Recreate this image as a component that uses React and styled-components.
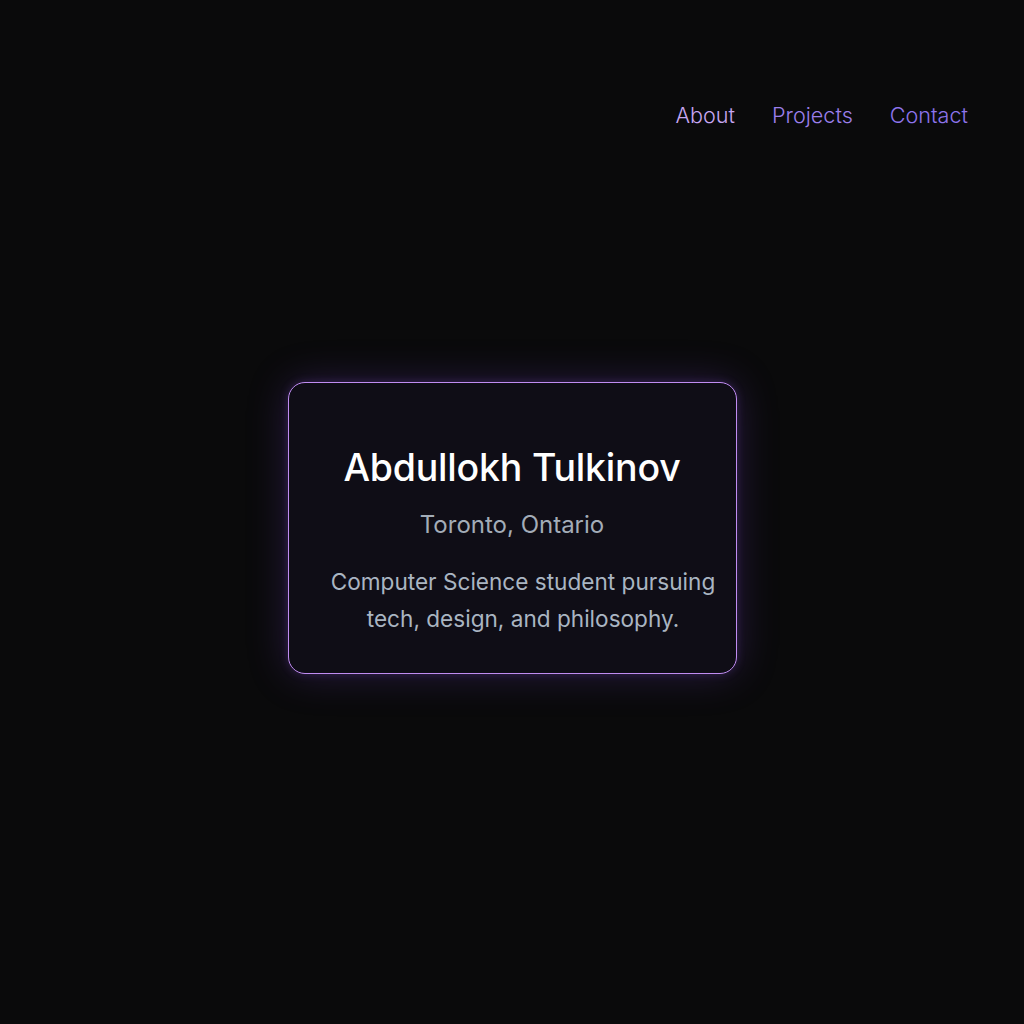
import React from "react";
import styled, { createGlobalStyle } from "styled-components";

const Global = createGlobalStyle`
  html, body { margin: 0; padding: 0; background: #0a0a0b; }
  body { font-family: Inter, "Noto Sans", sans-serif; }
`;

const Page = styled.div`
  min-height: 1024px;
  display: flex;
  flex-direction: column;
  background: #0a0a0b;
`;

const Header = styled.header`
  height: 140px;
  display: flex;
  justify-content: flex-end;
  align-items: flex-start;
  padding: 100px 56px 0 0;
  box-sizing: border-box;
`;

const Nav = styled.nav`
  display: flex;
  gap: 37px;
`;

const NavLink = styled.a`
  font-size: 21.6px;
  font-weight: 300;
  line-height: 30px;
  color: ${(p) => p.$color};
  text-decoration: none;
`;

const Main = styled.main`
  flex: 1;
  display: flex;
  justify-content: center;
  align-items: flex-start;
  padding-top: 242px;
`;

const Card = styled.section`
  width: 449px;
  height: 292px;
  box-sizing: border-box;
  border: 1.5px solid #c08cf2;
  border-radius: 17px;
  background: #0f0d16;
  box-shadow: 0 0 40px rgba(120, 70, 210, 0.26), 0 0 10px rgba(160, 100, 240, 0.22);
  display: flex;
  flex-direction: column;
  align-items: center;
  padding-top: 62px;
`;

const Name = styled.h1`
  margin: 0;
  font-size: 37.5px;
  font-weight: 500;
  line-height: 46px;
  color: #ffffff;
  letter-spacing: -0.2px;
`;

const Location = styled.p`
  margin: 19px 0 0;
  font-size: 24px;
  font-weight: 400;
  line-height: 30px;
  color: #a3acb8;
`;

const Bio = styled.p`
  margin: 23px 0 0 22px;
  font-size: 22.6px;
  font-weight: 400;
  line-height: 37px;
  color: #aab5c2;
  text-align: center;
`;

export default function App() {
  return (
    <>
      <Global />
      <Page>
        <Header>
          <Nav>
            <NavLink href="#" $color="#c7a6f2">About</NavLink>
            <NavLink href="#" $color="#9b7fea">Projects</NavLink>
            <NavLink href="#" $color="#8d74ec">Contact</NavLink>
          </Nav>
        </Header>
        <Main>
          <Card>
            <Name>Abdullokh Tulkinov</Name>
            <Location>Toronto, Ontario</Location>
            <Bio>
              Computer Science student pursuing
              <br />
              tech, design, and philosophy.
            </Bio>
          </Card>
        </Main>
      </Page>
    </>
  );
}
